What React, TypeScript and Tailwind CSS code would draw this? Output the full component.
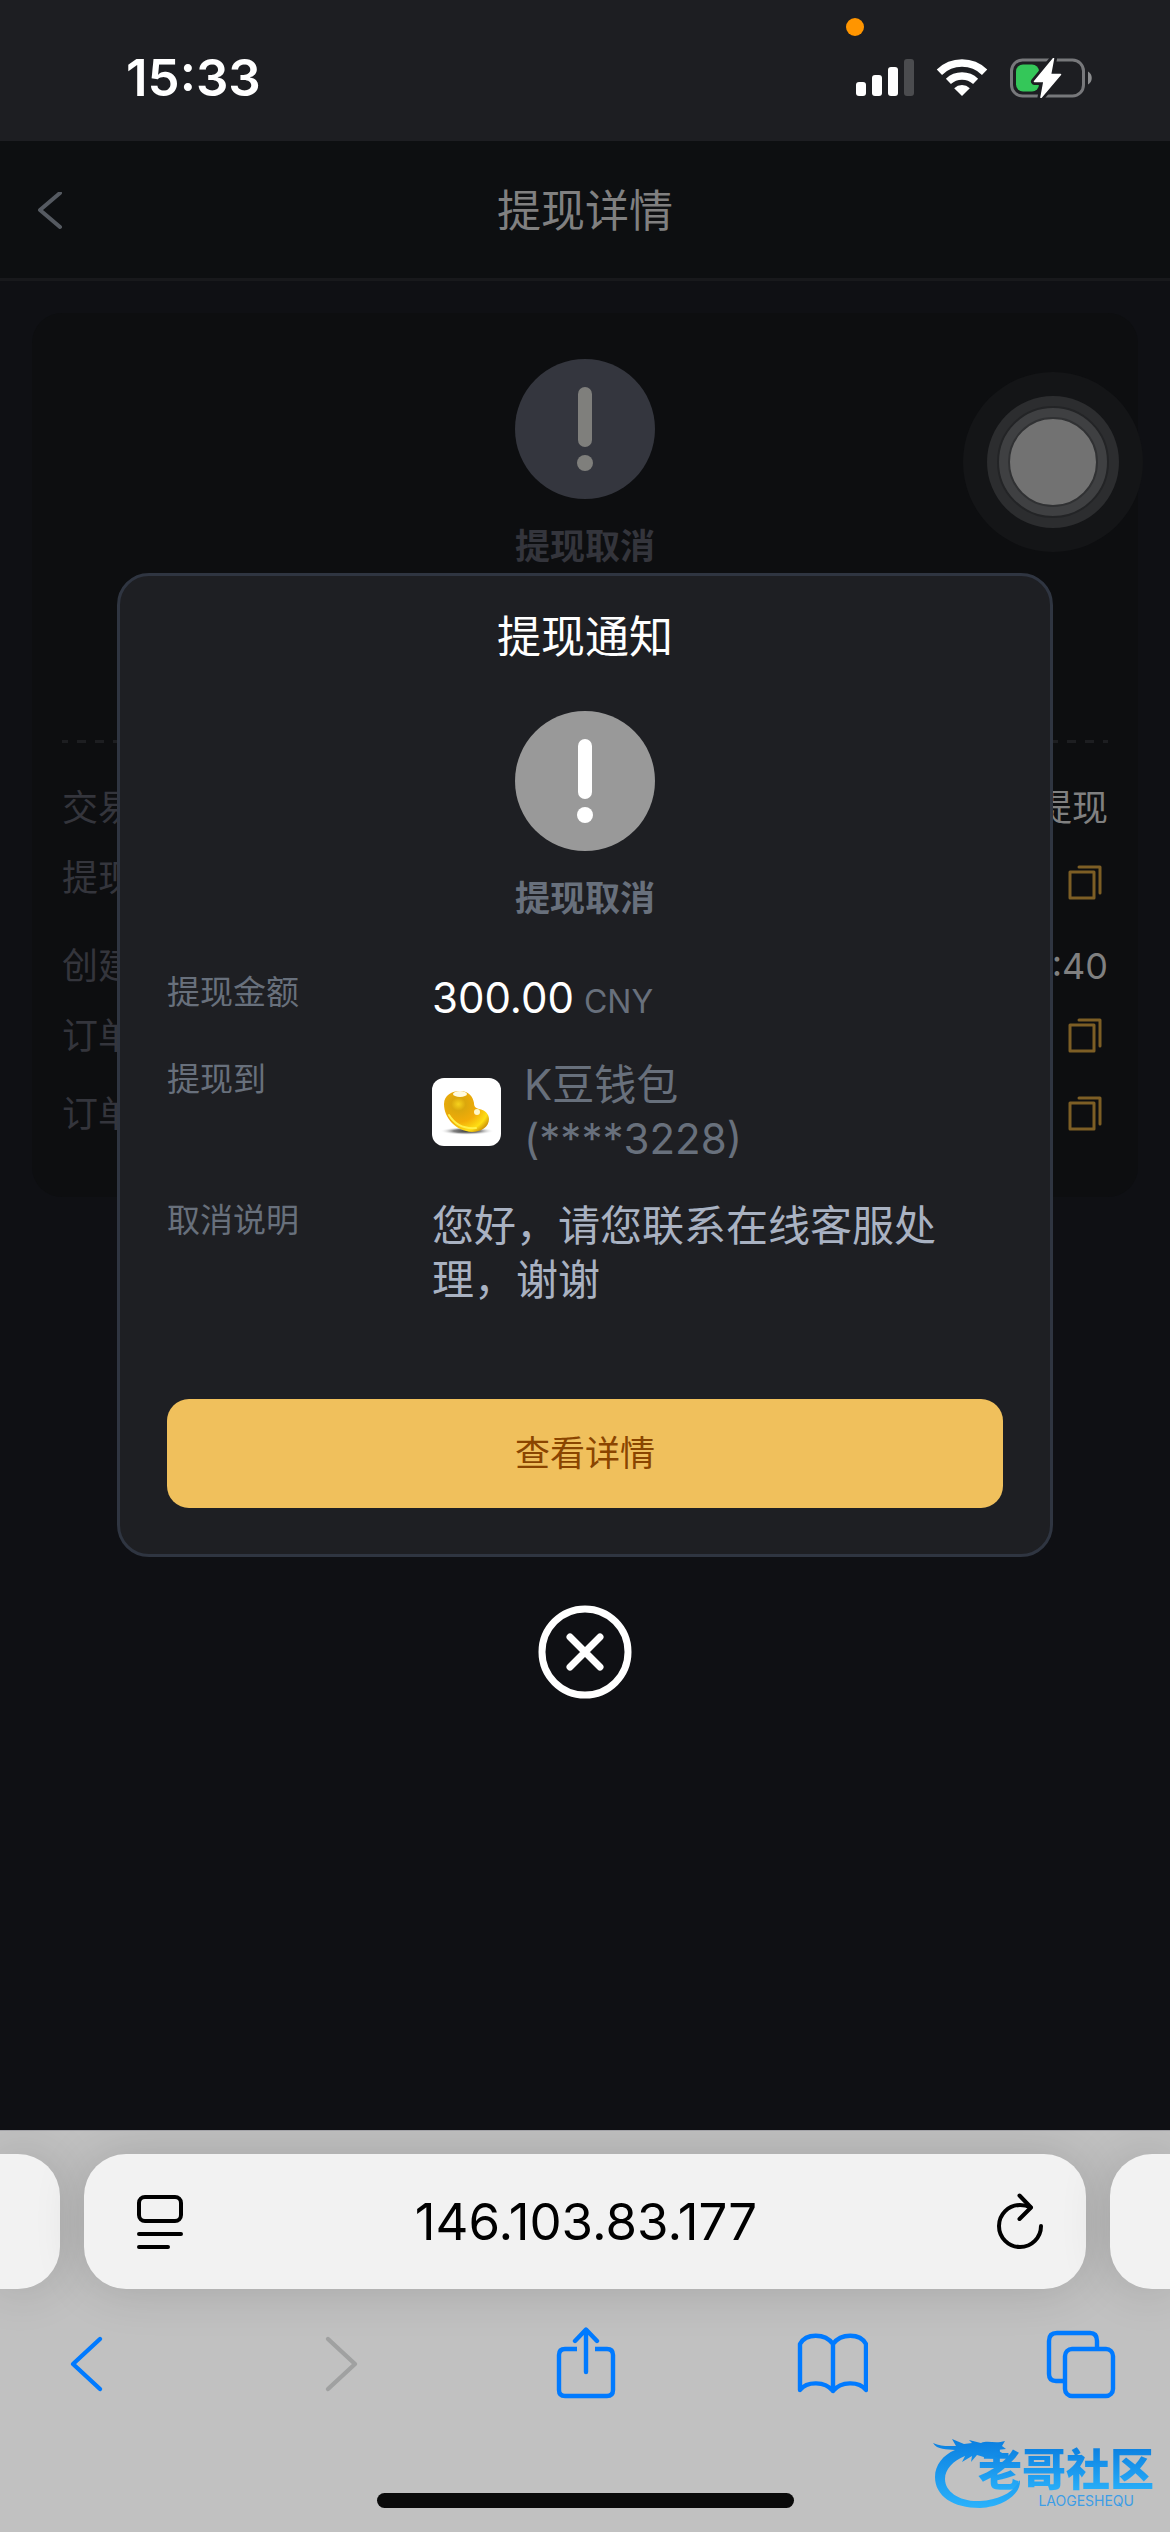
import type { ReactNode } from "react";

const orderRows = [
  { label: "交易", value: "提现", copy: false, className: "mt-[38px]" },
  { label: "提现", value: "", copy: true, className: "mt-4 min-h-16" },
  { label: "创建", value: ":40", copy: false, className: "mt-6" },
  { label: "订单", value: "", copy: true, className: "mt-4" },
  { label: "订单", value: "", copy: true, className: "mt-6" },
];

function AlertIcon({ circle, mark }: { circle: string; mark: string }) {
  return (
    <svg width="140" height="140" viewBox="0 0 140 140" aria-hidden="true">
      <circle cx="70" cy="70" r="70" className={circle} />
      <rect x="63" y="28" width="14" height="60" rx="7" className={mark} />
      <circle cx="70" cy="104" r="8" className={mark} />
    </svg>
  );
}

function CopyIcon() {
  return (
    <svg width="36" height="36" viewBox="0 0 36 36" fill="none" stroke="#7d5e25" strokeWidth="3" strokeLinejoin="round" strokeLinecap="round">
      <rect x="2" y="7" width="24" height="26" />
      <path d="M11 2H32V28" />
    </svg>
  );
}

function SignalIcon() {
  return (
    <svg width="58" height="38" viewBox="0 0 58 38" fill="#fff" aria-hidden="true">
      <rect x="0" y="23" width="10" height="14" rx="3" />
      <rect x="16" y="16" width="10" height="21" rx="3" />
      <rect x="32" y="8" width="10" height="29" rx="3" />
      <rect x="48" y="0" width="10" height="37" rx="3" fill="#4b4c4f" />
    </svg>
  );
}

function WifiIcon() {
  return (
    <svg width="52" height="38" viewBox="0 0 52 38" fill="none" stroke="#fff" aria-hidden="true">
      <path d="M3.4 13.2A32.5 32.5 0 0 1 48.6 13.2" strokeWidth="7.6" />
      <path d="M12.4 22.4A20 20 0 0 1 39.6 22.4" strokeWidth="7.4" />
      <path d="M18.2 29.2A11.4 11.4 0 0 1 33.8 29.2L26 37Z" fill="#fff" stroke="none" />
    </svg>
  );
}

function BatteryIcon() {
  const bolt = "M43.5 0.5L24.5 23.5H34L31 39.5L50.5 16.5H40.5Z";

  return (
    <svg width="84" height="40" viewBox="0 0 84 40" aria-hidden="true">
      <rect x="1.5" y="2" width="72" height="36" rx="11" fill="none" stroke="#77787b" strokeWidth="3" />
      <path d="M78 13.5C83 16 83 24 78 26.5Z" fill="#8b8c8e" />
      <rect x="6" y="6.5" width="23" height="27" rx="7" fill="#34c759" />
      <path d={bolt} fill="#1d1e22" stroke="#1d1e22" strokeWidth="7" strokeLinejoin="round" />
      <path d={bolt} fill="#fff" stroke="#fff" strokeWidth="1.5" strokeLinejoin="round" />
    </svg>
  );
}

function BeanIcon() {
  return (
    <svg width="69" height="68" viewBox="0 0 69 68" className="shrink-0 rounded-xl bg-white" aria-hidden="true">
      <defs>
        <radialGradient id="bean" cx="0.32" cy="0.32" r="0.8">
          <stop offset="0" stopColor="#f6d21c" />
          <stop offset="0.2" stopColor="#dba70c" />
          <stop offset="0.55" stopColor="#f3ac08" />
          <stop offset="0.85" stopColor="#ffdf14" />
          <stop offset="1" stopColor="#d39a0a" />
        </radialGradient>
        <radialGradient id="beanShadow">
          <stop offset="0" stopColor="#333" />
          <stop offset="0.5" stopColor="#666" stopOpacity="0.8" />
          <stop offset="1" stopColor="#fff" stopOpacity="0" />
        </radialGradient>
      </defs>
      <ellipse cx="35" cy="53" rx="27" ry="4" fill="url(#beanShadow)" />
      <path d="M12 26C12 17 20 13 28 13C37 13 41 19 42 25C42 28 43 30 47 31C53 32 57 36 57 41C57 49 49 54 40 54C24 53 12 40 12 26Z" fill="url(#bean)" />
      <ellipse cx="28" cy="16" rx="7" ry="3" fill="#fffbe0" />
      <circle cx="45" cy="34" r="3" fill="#fff7c8" />
      <path d="M17 37C23 47 32 51 44 50" stroke="#fff04a" strokeWidth="2" fill="none" strokeLinecap="round" />
    </svg>
  );
}

function ToolButton({ label, children, disabled }: { label: string; children: ReactNode; disabled?: boolean }) {
  return (
    <button type="button" aria-label={label} disabled={disabled}>
      <svg
        width="72"
        height="72"
        viewBox="0 0 72 72"
        fill="none"
        strokeWidth="4.4"
        strokeLinecap="round"
        strokeLinejoin="round"
        className={disabled ? "stroke-[#a0a1a1]" : "stroke-[#007aff]"}
      >
        {children}
      </svg>
    </button>
  );
}

function StatusBar() {
  return (
    <div className="relative flex items-center justify-between bg-[#1d1e22] pt-[46px] pb-[31px] pr-[76px] pl-[126px]">
      <span className="text-[51px] leading-[64px] font-semibold text-white">15:33</span>
      <div className="flex items-center gap-[22px]">
        <SignalIcon />
        <WifiIcon />
        <BatteryIcon />
      </div>
      <span className="absolute top-[18px] right-[306px] size-[18px] rounded-full bg-[#ff9500]" />
    </div>
  );
}

function OrderCard() {
  return (
    <section className="rounded-[30px] bg-[#0d0e10] px-[30px] pt-[46px] pb-14">
      <div className="flex flex-col items-center gap-5">
        <AlertIcon circle="fill-[#34363e]" mark="fill-[#7f7f7c]" />
        <p className="text-[35px] leading-[54px] font-bold text-[#34353c]">提现取消</p>
      </div>
      <div className="mt-[167px] h-[3px] bg-[repeating-linear-gradient(90deg,#1d1e21_0_6px,transparent_6px_15px,#1d1e21_15px_18px)]" />
      {orderRows.map((row, i) => (
        <div key={i} className={`flex justify-between text-[36px] leading-[54px] ${row.className}`}>
          <span className="text-[#34353c]">{row.label}</span>
          {row.copy ? (
            <button type="button" aria-label="复制" className="pr-1">
              <CopyIcon />
            </button>
          ) : (
            <span className="text-[#808080]">{row.value}</span>
          )}
        </div>
      ))}
    </section>
  );
}

function NoticeModal() {
  return (
    <div role="dialog" aria-labelledby="notice-title" className="flex w-4/5 flex-col rounded-[32px] border-[3px] border-[#2f3541] bg-[#1e1f23] px-[47px] pt-[31px] pb-[46px]">
      <h2 id="notice-title" className="text-center text-[44px] leading-[60px] text-white">
        提现通知
      </h2>
      <div className="mt-11 flex flex-col items-center gap-5">
        <AlertIcon circle="fill-[#999999]" mark="fill-white" />
        <p className="text-[35px] leading-[54px] font-bold text-[#68707c]">提现取消</p>
      </div>

      <dl className="mt-[46px] grid grid-cols-[265px_1fr] gap-y-[33px] text-[42px] leading-[54px] text-[#68707c]">
        <dt className="text-[33px] leading-[42px]">提现金额</dt>
        <dd className="flex items-baseline gap-[10px]">
          <span className="text-white">300.00</span>
          <span className="text-[32px] leading-[42px]">CNY</span>
        </dd>
        <dt className="text-[33px] leading-[42px]">提现到</dt>
        <dd className="flex items-center gap-[23px]">
          <BeanIcon />
          <span>
            K豆钱包
            <br />
            (****3228)
          </span>
        </dd>
        <dt className="text-[33px] leading-[42px]">取消说明</dt>
        <dd className="pr-[60px] text-[#a9b2c2]">您好，请您联系在线客服处理，谢谢</dd>
      </dl>

      <button type="button" className="mt-[92px] h-[109px] rounded-[22px] bg-[#f0c05c] text-[35px] text-[#8a4500]">
        查看详情
      </button>
    </div>
  );
}

function AssistiveTouch() {
  return (
    <div className="absolute top-[231px] right-[27px] flex size-[180px] items-center justify-center rounded-full bg-[#141517]">
      <div className="flex size-[132px] items-center justify-center rounded-full bg-[#2c2d2f]">
        <div className="flex size-[112px] items-center justify-center rounded-full border-2 border-[#232426] bg-[#3f4042]">
          <div className="size-[90px] rounded-full border-2 border-[#303133] bg-[#727272]" />
        </div>
      </div>
    </div>
  );
}

function BrowserBar() {
  return (
    <footer className="relative overflow-hidden border-t border-[#a3a3a8] bg-[#c1c1c1] pt-[23px] pb-6">
      <div className="flex gap-6">
        <div className="h-[135px] w-[60px] rounded-r-[42px] bg-[#f2f2f2] shadow-[0_0_50px_rgba(0,0,0,0.15)]" />
        <div className="flex h-[135px] flex-1 items-center justify-between rounded-[42px] bg-[#f2f2f2] pr-[42px] pl-[52px] shadow-[0_0_50px_rgba(0,0,0,0.15)]">
          <button type="button" aria-label="页面菜单">
            <svg width="48" height="56" viewBox="0 0 48 56" fill="none" stroke="#000" strokeWidth="4" strokeLinecap="round">
              <rect x="3" y="3" width="42" height="24" rx="6" />
              <path d="M3 40H45M3 53H32" />
            </svg>
          </button>
          <input
            type="text"
            aria-label="网址"
            defaultValue="146.103.83.177"
            className="mr-2 min-w-0 flex-1 bg-transparent text-center text-[51px] leading-[60px] text-black outline-none"
          />
          <button type="button" aria-label="刷新">
            <svg width="48" height="58" viewBox="0 0 48 58" fill="none" stroke="#000" strokeWidth="4" strokeLinecap="round" strokeLinejoin="round">
              <path d="M34.5 14.5C31 12.5 28 12 24 12A21 21 0 1 0 45 33" />
              <path d="M23.5 2.5L35 14.5L23.5 26" />
            </svg>
          </button>
        </div>
        <div className="h-[135px] w-[60px] rounded-l-[42px] bg-[#f2f2f2] shadow-[0_0_50px_rgba(0,0,0,0.15)]" />
      </div>

      <nav className="mt-[38px] flex justify-between pr-[53px] pl-[50px]">
        <ToolButton label="后退">
          <path d="M50 12L23 37L50 62" />
        </ToolButton>
        <ToolButton label="前进" disabled>
          <path d="M29 12L56 37L29 62" />
        </ToolButton>
        <ToolButton label="分享">
          <path d="M29 22H17Q11 22 11 28V63Q11 69 17 69H59Q65 69 65 63V28Q65 22 59 22H47" strokeLinecap="butt" />
          <path d="M38 45V3M27 14L38 2.5L49 14" />
        </ToolButton>
        <ToolButton label="书签">
          <path d="M37 17C29 6 10 6 4 17V63C11 54 29 54 37 64C45 54 63 54 70 63V17C64 6 45 6 37 17ZM37 17V64" />
        </ToolButton>
        <ToolButton label="标签页">
          <rect x="20" y="22" width="48" height="47" rx="7" />
          <path d="M52 21V14Q52 6 45 6H12Q4 6 4 14V47Q4 54 11 54H19" strokeLinecap="butt" />
        </ToolButton>
      </nav>

      <div className="mx-auto mt-[94px] h-[15px] w-[417px] rounded-full bg-[#0a0a0a]" />

      {/* Logo */}
      <div className="absolute right-4 bottom-6 flex flex-col items-end pl-[45px]">
        <svg width="94" height="74" viewBox="0 0 94 74" className="absolute bottom-0 left-0" aria-hidden="true">
          <defs>
            <linearGradient id="dragon" x1="0" y1="0" x2="0" y2="1">
              <stop offset="0" stopColor="#0b7fe0" />
              <stop offset="1" stopColor="#2bb2fb" />
            </linearGradient>
          </defs>
          <path
            d="M0 9C8 13 17 12 23 12L19 5L31 10L39 9L36 6L48 9C55 6 62 10 72 7L69 12L73 15L64 16L71 20L61 22L66 25L54 24L44 21L38 28L39 22L29 28L32 22C20 27 12 35 12 45C12 58 27 68 47 67C66 66 80 59 87 46C88 61 69 73 47 74C20 74 2 62 2 43C2 31 10 21 22 16C14 15 4 16 0 9Z"
            fill="url(#dragon)"
          />
        </svg>
        <span className="bg-linear-to-b from-[#0b7fe0] to-[#2bb2fb] bg-clip-text text-[44px] leading-[48px] font-black text-transparent">
          老哥社区
        </span>
        <span className="mr-5 text-[14px] leading-[14px] text-[#3c9de6]">LAOGESHEQU</span>
      </div>
    </footer>
  );
}

function App() {
  return (
    <div className="flex min-h-screen flex-col bg-[#0f1014] font-['Inter','Noto_Sans_CJK_SC',sans-serif]">
      <StatusBar />

      <div className="relative flex-1">
        <header className="flex items-center border-b-[3px] border-[#18191c] bg-[#0d0f11] px-[36px] pt-10 pb-9">
          <button type="button" aria-label="返回" className="w-7">
            <svg width="28" height="40" viewBox="0 0 28 40" fill="none" stroke="#555a61" strokeWidth="4" strokeLinecap="round" strokeLinejoin="round">
              <path d="M24 1L4 18L24 35" />
            </svg>
          </button>
          <h1 className="flex-1 pr-7 text-center text-[44px] leading-[61px] text-[#808080]">提现详情</h1>
        </header>

        <main className="p-8">
          <OrderCard />
        </main>

        <AssistiveTouch />

        {/* Modal */}
        <div className="absolute inset-0 flex flex-col items-center justify-center gap-12">
          <NoticeModal />
          <button type="button" aria-label="关闭">
            <svg width="94" height="94" viewBox="0 0 94 94" fill="none" stroke="#fff" strokeWidth="7" strokeLinecap="round">
              <circle cx="47" cy="47" r="43" />
              <path d="M32 32L62 62M62 32L32 62" />
            </svg>
          </button>
        </div>
      </div>

      <BrowserBar />
    </div>
  );
}

export default App;
